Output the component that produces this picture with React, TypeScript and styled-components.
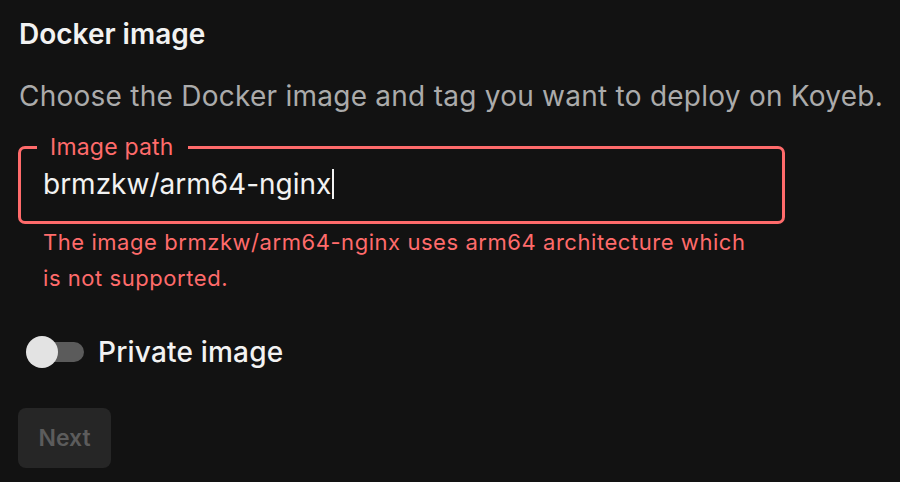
import styled, { createGlobalStyle } from "styled-components";

const GlobalStyle = createGlobalStyle`
  html, body {
    margin: 0;
    padding: 0;
    background: #121212;
  }
  body {
    font-family: Inter, "Noto Sans", sans-serif;
    color: #f2f2f2;
  }
`;

const Page = styled.main`
  display: flex;
  flex-direction: column;
  align-items: flex-start;
  width: 900px;
  height: 482px;
  padding: 16px 0 0 19px;
  box-sizing: border-box;
  overflow: hidden;
`;

const Title = styled.h2`
  margin: 0;
  font-size: 28px;
  line-height: 36px;
  font-weight: 600;
  color: #f2f2f2;
`;

const Lead = styled.p`
  margin: 26px 0 0;
  font-size: 28px;
  line-height: 36px;
  font-weight: 400;
  letter-spacing: 0.25px;
  color: #ababab;
`;

const Field = styled.fieldset`
  margin: 22px 0 0 -1px;
  width: 767px;
  height: 88px;
  box-sizing: border-box;
  padding: 0 22px;
  border: 3px solid #ff6b6b;
  border-radius: 7px;
`;

const Legend = styled.legend`
  margin-left: -6px;
  padding: 0 14px 0 13px;
  font-size: 23px;
  line-height: 22px;
  color: #ff6b6b;
  letter-spacing: 0.2px;
`;

const Value = styled.div`
  display: flex;
  align-items: center;
  font-size: 28px;
  line-height: 36px;
  color: #f2f2f2;
  margin-top: 8px;
`;

const Caret = styled.span`
  display: inline-block;
  width: 2px;
  height: 30px;
  margin-left: 1px;
  background: #f2f2f2;
`;

const ErrorText = styled.p`
  margin: 0 0 0 24px;
  max-width: 722px;
  font-size: 22px;
  line-height: 36px;
  letter-spacing: 0.55px;
  color: #ff6b6b;
`;

const SwitchRow = styled.label`
  display: flex;
  align-items: center;
  gap: 14px;
  margin: 39px 0 0 7px;
  font-size: 28px;
  font-weight: 500;
  letter-spacing: 0.2px;
  color: #f2f2f2;
`;

const Track = styled.span`
  position: relative;
  display: inline-block;
  width: 58px;
  height: 32px;
`;

const Rail = styled.span`
  position: absolute;
  left: 2px;
  top: 6px;
  width: 56px;
  height: 20px;
  border-radius: 10px;
  background: #5b5b5b;
`;

const Thumb = styled.span<{ $on?: boolean }>`
  position: absolute;
  top: 0;
  left: ${(p) => (p.$on ? "26px" : "0")};
  width: 32px;
  height: 32px;
  border-radius: 50%;
  background: #e3e3e3;
`;

const Button = styled.button`
  margin: 39px 0 0 -1px;
  width: 93px;
  height: 60px;
  border: 0;
  border-radius: 8px;
  background: #262626;
  color: #5c5c5c;
  font-family: Inter, "Noto Sans", sans-serif;
  font-size: 23px;
  font-weight: 600;
  cursor: not-allowed;
`;

export default function App() {
  return (
    <>
      <GlobalStyle />
      <Page>
        <Title>Docker image</Title>
        <Lead>Choose the Docker image and tag you want to deploy on Koyeb.</Lead>
        <Field>
          <Legend>Image path</Legend>
          <Value>
            brmzkw/arm64-nginx
            <Caret />
          </Value>
        </Field>
        <ErrorText>
          The image brmzkw/arm64-nginx uses arm64 architecture which is not
          supported.
        </ErrorText>
        <SwitchRow>
          <Track>
            <Rail />
            <Thumb />
          </Track>
          Private image
        </SwitchRow>
        <Button disabled>Next</Button>
      </Page>
    </>
  );
}
